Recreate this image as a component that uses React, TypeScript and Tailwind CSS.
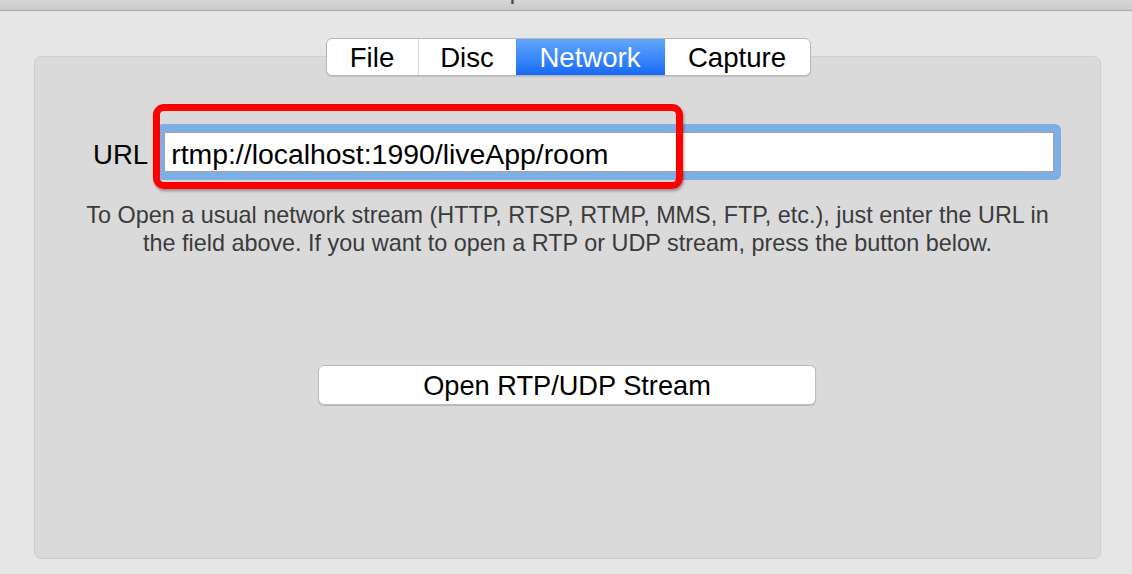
import React from 'react';

const tabs = ['File', 'Disc', 'Network', 'Capture'];

export default function App() {
  const font = { fontFamily: '"Liberation Sans", Arial, Helvetica, sans-serif' };

  return (
    <div className="w-[1132px] h-[574px] bg-[#e6e6e6] overflow-hidden" style={font}>
      {/* title bar, mostly cut off */}
      <div className="h-[11px] bg-gradient-to-b from-[#d6d6d6] to-[#cacaca] border-b border-[#a9a9a9] overflow-hidden flex justify-center">
        <span className="text-[26px] leading-[30px] -mt-[25px] text-[#4a4a4a]">Open Source</span>
      </div>

      {/* segmented tabs */}
      <div className="relative z-10 mt-[27px] flex justify-center pl-[4px]">
        <div className="flex h-[38px] rounded-[6px] border border-[#b8b8b8] bg-white shadow-[0_1px_1px_rgba(0,0,0,0.12)] overflow-hidden text-[27.6px] leading-none">
          {tabs.map((t, i) => {
            const active = t === 'Network';
            const widths = ['w-[91px]', 'w-[98px]', 'w-[149px]', 'w-[145px]'];
            return (
              <div
                key={t}
                className={`${widths[i]} flex items-center justify-center pt-[1px] ${
                  active
                    ? 'bg-gradient-to-b from-[#62a6fa] to-[#1669f6] text-white'
                    : 'text-black'
                } ${i === 1 ? 'border-l border-[#d8d8d8]' : ''}`}
              >
                {t}
              </div>
            );
          })}
        </div>
      </div>

      {/* panel */}
      <div className="-mt-[20px] ml-[34px] w-[1067px] h-[503px] rounded-[7px] bg-[#dadada] border border-[#cfcfcf]">
        <div className="relative mt-[67px] pl-[58px] pr-[39px] flex items-center gap-[9px]">
          <span className="text-[27.6px] text-black pt-[6px]">URL</span>
          <div className="flex-1 py-[8px] px-[7px] rounded-[6px] bg-[#7eaee6]">
            <div className="h-[40px] bg-white border border-[#a3a3a3] flex items-center px-[6px] pt-[5px] text-[28.4px] text-black">
              rtmp://localhost:1990/liveApp/room
            </div>
          </div>
          {/* red annotation box */}
          <div className="absolute left-[118px] -top-[20px] w-[530px] h-[85px] rounded-[11px] border-[7px] border-[#ff0000] shadow-[1px_2px_3px_rgba(0,0,0,0.35)]" />
        </div>

        <p className="mt-[21px] text-center text-[23.4px] leading-[28px] text-[#3b3b3b]">
          To Open a usual network stream (HTTP, RTSP, RTMP, MMS, FTP, etc.), just enter the URL in
          <br />
          the field above. If you want to open a RTP or UDP stream, press the button below.
        </p>

        <div className="mt-[108px] flex justify-center pr-[1px]">
          <button className="w-[498px] h-[40px] rounded-[6px] bg-white border border-[#bdbdbd] shadow-[0_1px_1px_rgba(0,0,0,0.18)] text-[27.2px] text-black leading-none pt-[2px]">
            Open RTP/UDP Stream
          </button>
        </div>
      </div>
    </div>
  );
}
